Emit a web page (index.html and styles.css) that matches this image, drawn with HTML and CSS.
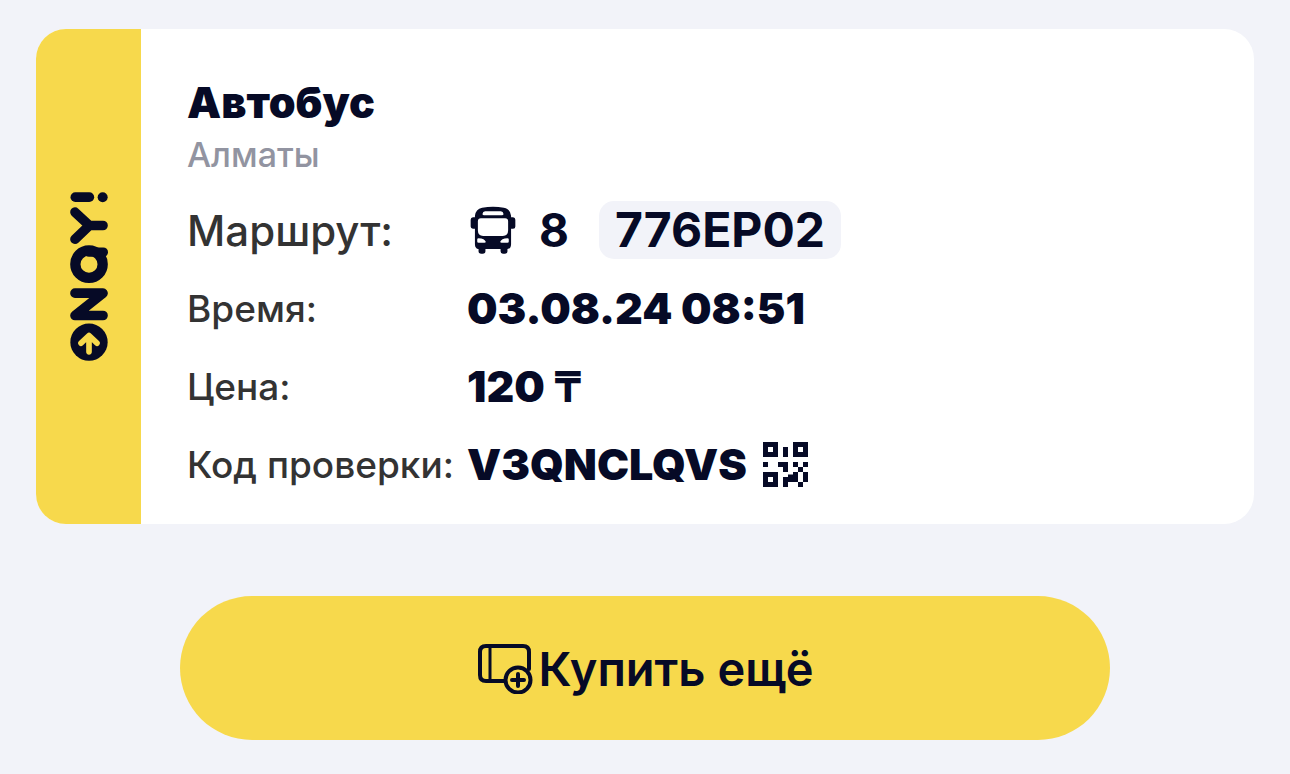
FILE: index.html
```html
<!DOCTYPE html>
<html lang="ru">
<head>
<meta charset="utf-8">
<meta name="viewport" content="width=device-width, initial-scale=1">
<title>Автобус</title>
<link rel="stylesheet" href="styles.css">
</head>
<body>
<main class="page">
  <article class="ticket">
    <div class="brand">
      <svg class="brand-logo" viewBox="60 35 114 506" role="img" aria-label="ONAY!">
        <g fill="none" stroke="currentColor" stroke-width="29" stroke-linecap="round" stroke-linejoin="round">
          <path d="M76 50H118"/>
          <path d="M75 95L118 135L75 176M118 135H159"/>
          <circle cx="117" cy="251" r="41" stroke-width="31"/>
          <path d="M117 215H160" stroke-width="28"/>
          <path d="M159 405H75L159 338H75"/>
        </g>
        <circle cx="158" cy="50" r="15" fill="currentColor"/>
        <circle cx="117" cy="485" r="56" fill="currentColor"/>
        <path class="brand-arrow" d="M117 466V514M93 488L117 465L141 488"/>
      </svg>
    </div>
    <div class="details">
      <h1 class="title">Автобус</h1>
      <p class="city">Алматы</p>
      <dl class="rows">
        <div class="row">
          <dt class="label label-large">Маршрут:</dt>
          <dd class="value route">
            <svg class="bus" viewBox="15 20 140 146" aria-hidden="true">
              <path fill="currentColor" fill-rule="evenodd" d="M52 25Q85 19 118 25Q138 29 140 50V54H146Q153 55 153 62V82Q153 89 146 89H140V136Q140 149 129 151V158Q129 165 121 165H115Q108 165 108 158V151H62V158Q62 165 54 165H49Q41 165 41 158V151Q30 149 30 136V89H24Q17 88 17 82V62Q17 55 24 54H30V50Q32 29 52 25ZM61 36Q54 36 53 44Q53 48 58 48H112Q117 48 117 44Q116 36 109 36ZM48 57Q39 57 39 66V94Q39 111 55 111H115Q131 111 131 94V66Q131 57 122 57ZM41 118Q37 118 37 122V128Q37 132 41 132H59Q63 132 63 129Q60 119 41 118ZM129 118Q110 119 107 129Q107 132 111 132H129Q133 132 133 128V122Q133 118 129 118Z"/>
            </svg>
            <span class="route-number">8</span>
            <span class="plate">776EP02</span>
          </dd>
        </div>
        <div class="row">
          <dt class="label">Время:</dt>
          <dd class="value">03.08.24 08:51</dd>
        </div>
        <div class="row">
          <dt class="label">Цена:</dt>
          <dd class="value">120 <span class="currency">₸</span></dd>
        </div>
        <div class="row">
          <dt class="label">Код проверки:</dt>
          <dd class="value code">V3QNCLQVS
            <svg class="qr" viewBox="0 0 9 9" aria-hidden="true">
              <path fill="currentColor" fill-rule="evenodd" d="M0 0H3V3H0ZM1 1V2H2V1ZM6 0H9V3H6ZM7 1V2H8V1ZM0 6H3V9H0ZM1 7V8H2V7ZM4 1H5V3H4ZM0 4H1V5H0ZM3 4H5V6H4V5H3ZM6 4H7V5H6ZM8 4H9V5H8ZM7 5H8V6H7ZM6 6H7V8H5V9H4V7H5V6.500H6ZM8 6H9V8H8ZM7 8H8V9H7Z"/>
            </svg>
          </dd>
        </div>
      </dl>
    </div>
  </article>
  <button class="buy" type="button">
    <svg class="buy-icon" viewBox="0 0 56 52" aria-hidden="true">
      <g fill="none" stroke="currentColor" stroke-width="4" stroke-linecap="round">
        <path d="M27 39H9Q3 39 3 33V10Q3 4 9 4H46Q52 4 52 10V27"/>
        <path d="M13 4V39" stroke-width="3"/>
        <circle cx="41" cy="38" r="12.500"/>
        <path d="M35 38H47M41 32V44"/>
      </g>
    </svg>
    <span>Купить ещё</span>
  </button>
</main>
</body>
</html>
```
FILE: styles.css
```css
* {
  box-sizing: border-box;
}

body {
  margin: 0;
  background: #f2f3f9;
  color: #060a26;
  font-family: Inter, "Liberation Sans", sans-serif;
}

.page {
  display: flex;
  flex-direction: column;
  align-items: center;
  gap: 72px;
  padding: 29px 36px 34px;
}

.ticket {
  display: flex;
  align-self: stretch;
  overflow: hidden;
  border-radius: 30px;
  background: #fff;
}

.brand {
  display: flex;
  flex: 0 0 105px;
  align-items: center;
  justify-content: center;
  background: #f7d94c;
}

.brand-logo {
  width: 38px;
  height: 169px;
}

.brand-arrow {
  fill: none;
  stroke: #f7d94c;
  stroke-width: 17px;
  stroke-linecap: round;
  stroke-linejoin: round;
}

.details {
  flex: 1;
  padding: 46px 46px 21px;
}

.title {
  margin: 0;
  font-size: 43px;
  font-weight: 900;
  line-height: 54px;
}

.city {
  margin: 0 0 10px;
  color: #9294a1;
  font-size: 34px;
  font-weight: 500;
  line-height: 52px;
}

.rows {
  margin: 0;
}

.row {
  display: grid;
  grid-template-columns: 280px 1fr;
  align-items: center;
  min-height: 78px;
}

.label {
  color: #333;
  font-size: 37px;
  font-weight: 500;
  white-space: nowrap;
}

.label-large {
  font-size: 42px;
}

.value {
  margin: 0;
  font-size: 43px;
  font-weight: 900;
}

.currency {
  font-weight: 700;
}

.route,
.code {
  display: flex;
  align-items: center;
}

.bus {
  width: 46px;
  height: 48px;
  margin: 0 23px 0 3px;
}

.route-number {
  margin-right: 30px;
  font-size: 46px;
  font-weight: 700;
}

.plate {
  padding: 0 16px;
  border-radius: 15px;
  background: #f2f3f9;
  font-size: 48px;
  font-weight: 700;
  line-height: 58px;
}

.code {
  gap: 16px;
}

.qr {
  width: 45px;
  height: 45px;
}

.buy {
  display: flex;
  align-items: center;
  justify-content: center;
  gap: 6px;
  width: 930px;
  max-width: 100%;
  min-height: 144px;
  padding: 0;
  border: 0;
  border-radius: 72px;
  background: #f7d94c;
  color: #060a26;
  font: inherit;
  font-size: 47px;
  font-weight: 600;
}

.buy-icon {
  width: 56px;
  height: 52px;
}
```
